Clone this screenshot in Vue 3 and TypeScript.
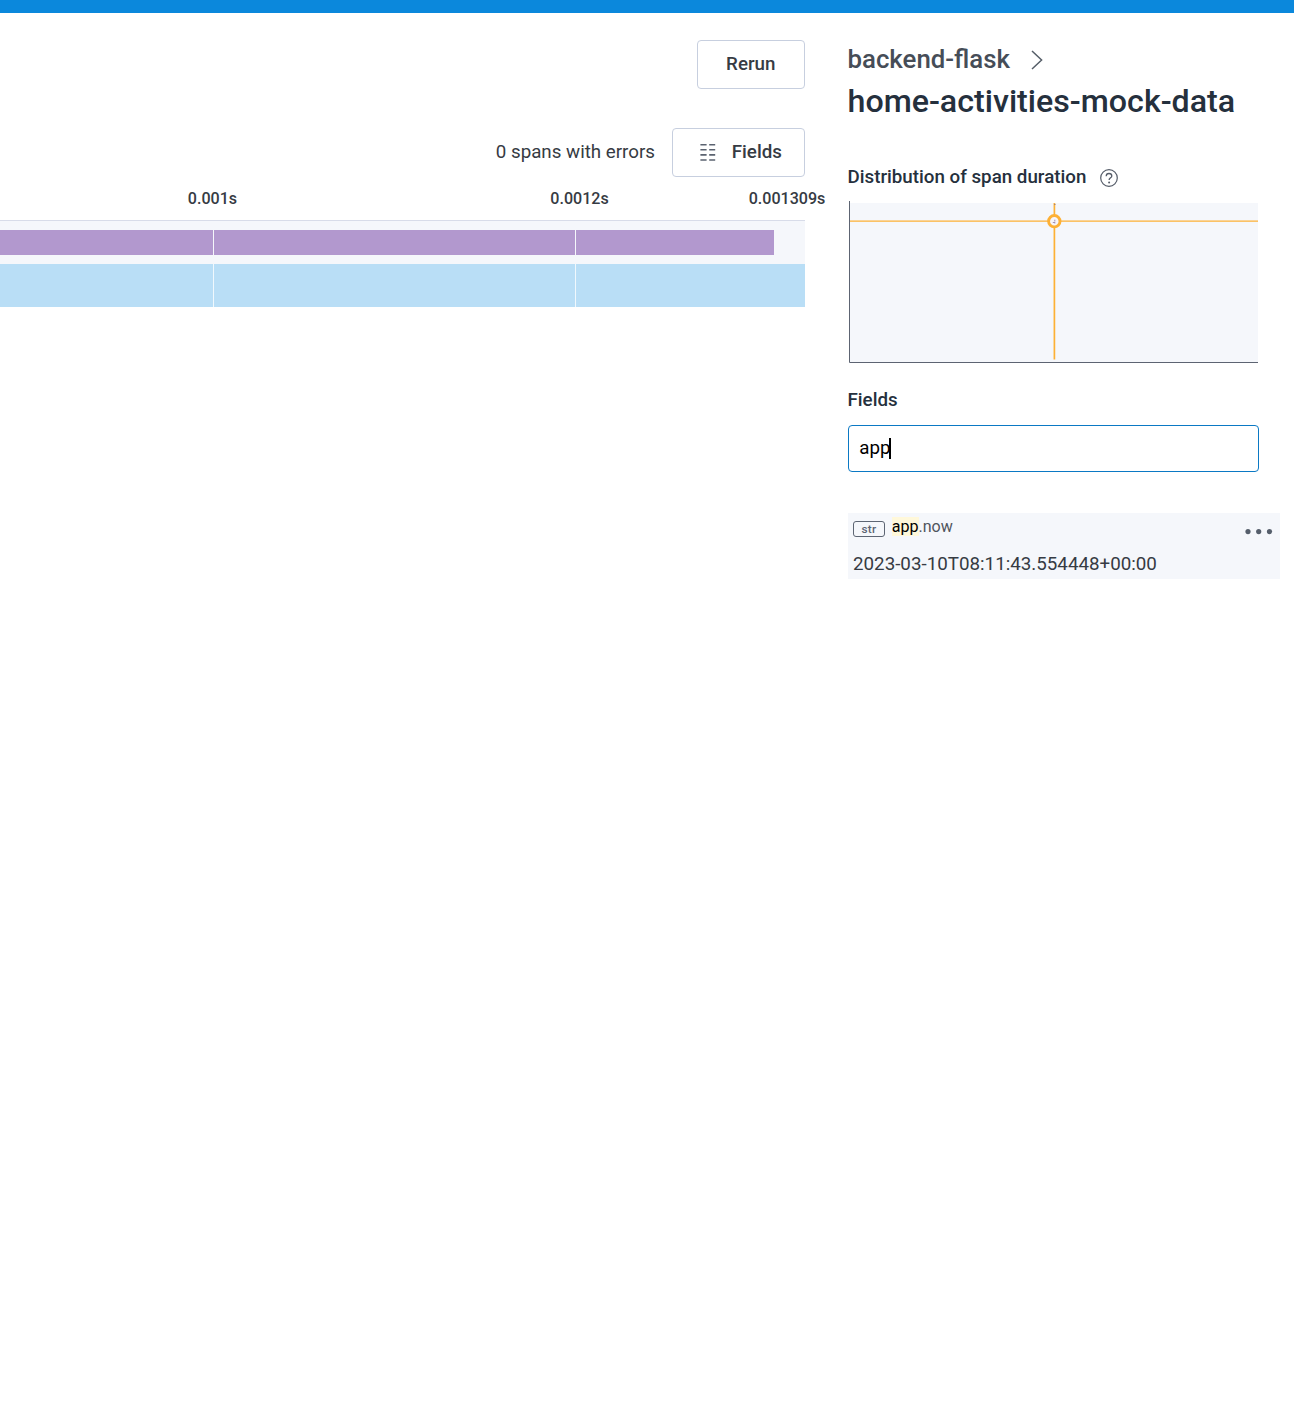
<script setup lang="ts">
import { ref } from 'vue'

interface Segment { id: number; width: number }

const query = ref<string>('app')
const spanSegments: Segment[] = [
  { id: 1, width: 213 },
  { id: 2, width: 361 },
  { id: 3, width: 198 },
]
const selectedSegments: Segment[] = [
  { id: 1, width: 213 },
  { id: 2, width: 361 },
  { id: 3, width: 229 },
]
</script>

<template>
  <div class="page">
    <header class="topbar"></header>
    <div class="body">
      <main class="trace">
        <div class="actions">
          <button class="btn rerun">Rerun</button>
        </div>
        <div class="toolbar">
          <span class="errors">0 spans with errors</span>
          <button class="btn fields-btn">
            <svg width="16" height="18" viewBox="0 0 16 18">
              <path d="M0.4 1.7h6.2M9.2 1.7h6M0.4 6.8h6.2M9.2 6.8h6M0.4 11.9h6.2M9.2 11.9h6M0.4 17h6.2M9.2 17h6" stroke="#5b6370" stroke-width="1.6" fill="none" />
            </svg>
            <span>Fields</span>
          </button>
        </div>
        <div class="axis">
          <span class="tick tick-a">0.001s</span>
          <span class="tick tick-b">0.0012s</span>
          <span class="tick tick-c">0.001309s</span>
        </div>
        <div class="row">
          <i v-for="s in spanSegments" :key="s.id" class="bar purple" :style="{ width: s.width + 'px' }"></i>
        </div>
        <div class="row selected">
          <i v-for="s in selectedSegments" :key="s.id" class="bar blue" :style="{ width: s.width + 'px' }"></i>
        </div>
      </main>

      <aside class="details">
        <div class="service">
          <span class="service-name">backend-flask</span>
          <svg width="12" height="20" viewBox="0 0 12 20">
            <path d="M1 1l9.6 9L1 19" fill="none" stroke="#555e68" stroke-width="1.5" />
          </svg>
        </div>
        <h1 class="span-name">home-activities-mock-data</h1>
        <div class="section">
          <span class="heading dist">Distribution of span duration</span>
          <svg width="18" height="18" viewBox="0 0 18 18">
            <circle cx="9" cy="9" r="8.3" fill="none" stroke="#555c68" stroke-width="1.2" />
            <path d="M6.2 7.2C6.2 5.500 7.400 4.500 9 4.500s2.800.9 2.800 2.400c0 1.900-2.700 2-2.700 4.200" fill="none" stroke="#555c68" stroke-width="1.3" />
            <circle cx="9.100" cy="13.400" r="1" fill="#555c68" />
          </svg>
        </div>
        <svg class="chart" width="410" height="162" viewBox="0 0 410 162">
          <rect x="1" y="2" width="408" height="159" fill="#f5f7fb" />
          <path d="M.5 0v161.500H409" fill="none" stroke="#5d6472" />
          <path d="M1 20.100H409" stroke="#fdb035" stroke-width="1.400" />
          <path d="M205.400 2v156.500" stroke="#fdb035" stroke-width="1.700" />
          <path d="M205 3.500h1.500" stroke="#a98272" />
          <circle cx="205.300" cy="20.200" r="5.700" fill="#f7f5fa" stroke="#fdb035" stroke-width="2.900" />
          <path d="M205.800 18.700v1.300M203.800 21.500h2M205.800 20.500v2" stroke="#9888ad" stroke-width=".9" />
        </svg>
        <h2 class="heading fields-title">Fields</h2>
        <div class="search">
          <span>{{ query }}</span><i class="caret"></i>
        </div>
        <div class="field">
          <div class="field-info">
            <div class="field-key">
              <span class="type">str</span>
              <span class="key"><mark>app</mark>.now</span>
            </div>
            <div class="field-value">2023-03-10T08:11:43.554448+00:00</div>
          </div>
          <svg class="more" width="28" height="6" viewBox="0 0 28 6">
            <g fill="#555e6b"><circle cx="3" cy="2.600" r="2.600" /><circle cx="13.700" cy="2.600" r="2.600" /><circle cx="24.500" cy="2.600" r="2.600" /></g>
          </svg>
        </div>
      </aside>
    </div>
  </div>
</template>

<style>
body { margin: 0; background: #fff; }
</style>

<style scoped>
.page { width: 1294px; height: 1424px; overflow: hidden; background: #fff; font-family: Roboto, "Liberation Sans", sans-serif; color: #363b43; }
.page * { box-sizing: border-box; }
.topbar { height: 13px; background: #0b88dc; }
.body { display: flex; gap: 43px; }
.trace { width: 805px; flex: none; padding-top: 27px; }
.actions { display: flex; justify-content: flex-end; height: 49px; }
.btn { display: flex; align-items: center; justify-content: center; height: 49px; padding: 0 0 2px; background: #fff; border: 1px solid #c7cfdf; border-radius: 4px; font: 500 18.760px/24px Roboto, sans-serif; color: #363b43; }
.rerun { width: 108px; padding-right: .5px; }
.toolbar { display: flex; justify-content: flex-end; align-items: center; gap: 17px; margin-top: 39px; height: 49px; }
.errors { font-size: 18.760px; line-height: 24px; padding-bottom: 2px; white-space: nowrap; }
.fields-btn { width: 133px; gap: 15.700px; padding-left: 5px; }
.fields-btn svg { margin-top: 1px; }
.axis { display: flex; height: 44px; padding-top: 11px; border-bottom: 1px solid #d8dce9; font-size: 16.080px; font-weight: 500; line-height: 22px; white-space: nowrap; }
.tick { flex: none; display: flex; justify-content: center; }
.tick-a { width: 60px; margin-left: 182.500px; }
.tick-b { width: 70px; margin-left: 302px; }
.tick-c { width: 90px; margin-left: 127.500px; margin-right: -40px; }
.row { display: flex; align-items: center; gap: 1px; height: 43px; background: #f5f7fb; }
.bar { flex: none; height: 25px; }
.row .purple { background: #b298ce; }
.row.selected { background: #f0f8fd; }
.row .blue { height: 43px; background: #b9def6; }
.details { width: 432px; flex: none; padding-top: 29px; color: #25303d; }
.service { display: flex; align-items: center; height: 34px; gap: 21px; color: #464d57; }
.service-name { margin-left: -.5px; font-size: 25.800px; font-weight: 500; line-height: 34px; }
.service svg { margin-top: 2px; }
.span-name { margin: 4px 0 0 -.5px; font-size: 32.200px; font-weight: 500; line-height: 42px; white-space: nowrap; }
.section { display: flex; align-items: center; gap: 14px; margin-top: 43px; height: 24px; }
.heading { margin: 0 0 0 -.5px; font-size: 18.760px; font-weight: 500; line-height: 24px; white-space: nowrap; }
.section svg { margin-top: 1px; }
.chart { display: block; margin: 12px 0 0 1px; }
.fields-title { margin-top: 25px; }
.search { display: flex; align-items: center; width: 411px; height: 47px; margin-top: 13px; padding: 0 10.200px 1px; border: 1px solid #0b79c4; border-radius: 4px; font-size: 18.760px; line-height: 24px; color: #000; }
.caret { width: 2px; height: 21px; margin-left: -1px; background: #000; }
.field { display: flex; justify-content: space-between; width: 432px; height: 66px; margin-top: 41px; padding: 4px 7px 0 5px; background: #f5f7fb; }
.field-key { display: flex; align-items: flex-start; gap: 6.700px; height: 20px; }
.type { display: flex; align-items: center; justify-content: center; width: 32px; height: 16px; margin-top: 4px; border: 1.500px solid #5d6573; border-radius: 3px; font-size: 11.800px; font-weight: 500; line-height: 14px; letter-spacing: .3px; color: #5d6573; }
.key { font-size: 16.080px; line-height: 20px; color: #50555d; }
mark { background: #fff8da; color: #000; }
.field-value { margin-top: 15px; font-size: 18.780px; line-height: 24px; color: #363b43; white-space: nowrap; }
.more { margin-top: 12px; }
</style>
